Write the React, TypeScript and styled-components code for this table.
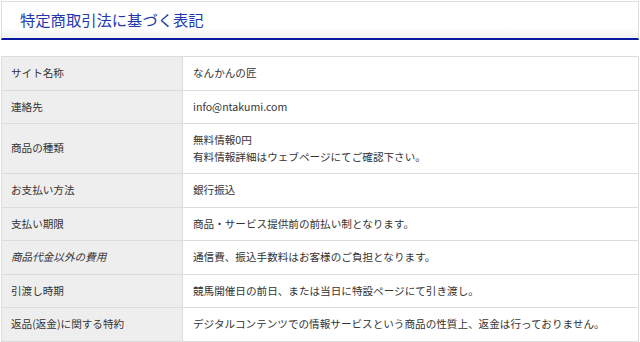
import styled, { createGlobalStyle } from "styled-components";

const GlobalStyle = createGlobalStyle`
  html, body {
    margin: 0;
    padding: 0;
    background: #ffffff;
  }
  body {
    font-family: "Noto Sans CJK JP", "Liberation Sans", sans-serif;
    color: #333333;
  }
`;

const Page = styled.div`
  width: 638px;
  padding: 1px 1px 0 1px;
`;

const Heading = styled.h2`
  margin: 0;
  height: 36px;
  display: flex;
  align-items: center;
  padding: 0 0 0 18px;
  border: 1px solid #dddddd;
  border-bottom: 2px solid #0b1a9c;
  background: linear-gradient(to bottom, #ffffff 0%, #ffffff 70%, #f2f2f2 100%);
  color: #2438ae;
  font-size: 15.3px;
  font-weight: normal;
  line-height: 1;
`;

const Table = styled.table`
  width: 100%;
  margin-top: 16px;
  border-collapse: collapse;
  font-size: 10.6px;
  line-height: 16.5px;
`;

const Label = styled.th<{ $italic?: boolean }>`
  width: 162px;
  padding: 8px 9px;
  background: #eeeeee;
  border: 1px solid #dcdcdc;
  text-align: left;
  font-weight: normal;
  font-style: ${({ $italic }) => ($italic ? "italic" : "normal")};
  vertical-align: middle;
`;

const Value = styled.td`
  padding: 8px 10px;
  border: 1px solid #dcdcdc;
  background: #ffffff;
  vertical-align: middle;
`;

const rows: { label: string; value: string[]; italic?: boolean }[] = [
  { label: "サイト名称", value: ["なんかんの匠"] },
  { label: "連絡先", value: ["info@ntakumi.com"] },
  {
    label: "商品の種類",
    value: ["無料情報0円", "有料情報詳細はウェブページにてご確認下さい。"],
  },
  { label: "お支払い方法", value: ["銀行振込"] },
  { label: "支払い期限", value: ["商品・サービス提供前の前払い制となります。"] },
  {
    label: "商品代金以外の費用",
    value: ["通信費、振込手数料はお客様のご負担となります。"],
    italic: true,
  },
  { label: "引渡し時期", value: ["競馬開催日の前日、または当日に特設ページにて引き渡し。"] },
  {
    label: "返品(返金)に関する特約",
    value: ["デジタルコンテンツでの情報サービスという商品の性質上、返金は行っておりません。"],
  },
];

export default function App() {
  return (
    <>
      <GlobalStyle />
      <Page>
        <Heading>特定商取引法に基づく表記</Heading>
        <Table>
          <tbody>
            {rows.map((row) => (
              <tr key={row.label}>
                <Label $italic={row.italic}>{row.label}</Label>
                <Value>
                  {row.value.map((line, i) => (
                    <div key={i}>{line}</div>
                  ))}
                </Value>
              </tr>
            ))}
          </tbody>
        </Table>
      </Page>
    </>
  );
}
